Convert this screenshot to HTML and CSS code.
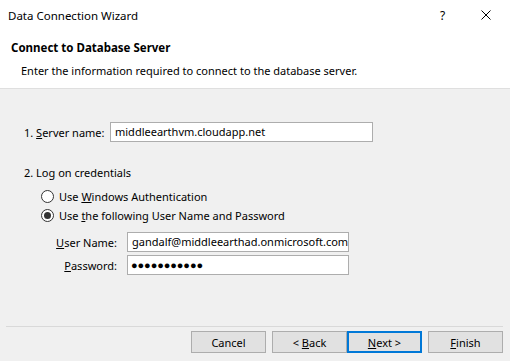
FILE: index.html
```html
<!DOCTYPE html>
<html>
<head>
<meta charset="utf-8">
<link rel="stylesheet" href="styles.css">
</head>
<body>
<div class="window">
  <div class="titlebar">
    <span class="title">Data Connection Wizard</span>
    <span class="help">?</span>
    <span class="close"><svg width="10" height="10" viewBox="0 0 10 10"><path d="M0.5 0.5 L9.5 9.5 M9.5 0.5 L0.5 9.5" stroke="#000" stroke-width="1" fill="none"/></svg></span>
  </div>
  <div class="header">
    <div class="heading">Connect to Database Server</div>
    <div class="subheading">Enter the information required to connect to the database server.</div>
  </div>
  <div class="content">
    <div class="server-row">
      <span class="label">1. <u>S</u>erver name:</span>
      <div class="input server-input">middleearthvm.cloudapp.net</div>
    </div>
    <div class="section">2. Log on credentials</div>
    <div class="radios">
      <div class="radio"><span class="circle"></span><span>Use <u>W</u>indows Authentication</span></div>
      <div class="radio"><span class="circle checked"></span><span>Use <u>t</u>he following User Name and Password</span></div>
    </div>
    <div class="creds">
      <span class="clabel"><u>U</u>ser Name:</span>
      <div class="input">gandalf@middleearthad.onmicrosoft.com</div>
      <span class="clabel"><u>P</u>assword:</span>
      <div class="input pw">●●●●●●●●●●●</div>
    </div>
  </div>
  <div class="footer">
    <div class="sep"></div>
    <div class="buttons">
      <div class="btn cancel"><span>Cancel</span></div>
      <div class="btn back"><span>&lt; <u>B</u>ack</span></div>
      <div class="btn next"><span><u>N</u>ext &gt;</span></div>
      <div class="btn finish"><span><u>F</u>inish</span></div>
    </div>
  </div>
</div>
</body>
</html>
```

FILE: styles.css
```css
* { box-sizing: border-box; }
html, body { margin: 0; padding: 0; }
body {
  width: 510px;
  height: 361px;
  overflow: hidden;
  background: #f0f0f0;
  font-family: "Noto Sans", "Open Sans", sans-serif;
  font-size: 11px;
  color: #000;
}
.window { width: 510px; height: 361px; display: flex; flex-direction: column; }
.titlebar {
  height: 30px;
  background: #fff;
  display: flex;
  align-items: center;
  padding-left: 8px;
}
.title { flex: 1; font-size: 11.5px; }
.help { width: 10px; margin-right: 31px; font-size: 12px; }
.close { width: 10px; height: 10px; margin-right: 19px; display: flex; }
.header {
  background: #fff;
  height: 59px;
  border-bottom: 1px solid #dfdfdf;
  padding-left: 11px;
  padding-top: 9px;
}
.heading { font-weight: bold; font-size: 11.5px; line-height: 18px; }
.subheading { padding-left: 10px; margin-top: 6px; line-height: 16px; }
.content { flex: 1; padding-left: 24px; }
.server-row { display: flex; align-items: center; margin-top: 33px; height: 20px; }
.server-row .label { width: 86px; white-space: nowrap; }
.input {
  height: 20px;
  background: #fff;
  border: 1px solid #adadad;
  padding-left: 4px;
  line-height: 18px;
  white-space: nowrap;
  overflow: hidden;
}
.server-input { width: 263px; }
.section { margin-top: 22px; line-height: 18px; }
.radios { margin-top: 6px; padding-left: 17px; display: flex; flex-direction: column; gap: 3px; }
.radio { display: flex; align-items: center; height: 16px; }
.circle {
  width: 13px; height: 13px;
  border: 1px solid #333;
  border-radius: 50%;
  background: #fff;
  margin-right: 5px;
  display: flex; align-items: center; justify-content: center;
}
.circle.checked::after {
  content: "";
  width: 7px; height: 7px;
  border-radius: 50%;
  background: #333;
}
.creds {
  margin-top: 9px;
  display: grid;
  grid-template-columns: 93px 222px;
  column-gap: 10px;
  row-gap: 3px;
  align-items: center;
}
.clabel { text-align: right; white-space: nowrap; }
.pw { font-size: 11px; letter-spacing: -0.1px; line-height: 18px; padding-left: 3px; }
.footer { height: 35px; padding-left: 6px; padding-right: 7px; }
.sep { height: 1px; background: #d9d9d9; }
.buttons { display: flex; justify-content: flex-end; margin-top: 4px; }
.btn {
  width: 75px; height: 22px;
  background: #e1e1e1;
  border: 1px solid #adadad;
  display: flex; align-items: center; justify-content: center;
  white-space: pre;
}
.cancel, .next { margin-right: 6px; }
.back { margin-right: 0; }
.next { border: 2px solid #0078d7; }
```
